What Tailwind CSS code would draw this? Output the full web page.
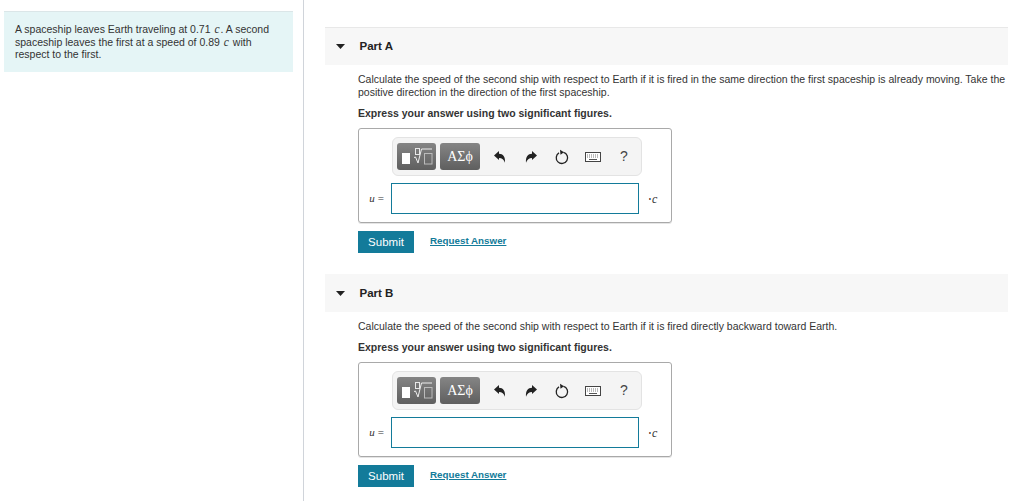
<!DOCTYPE html>
<html>
<head>
<meta charset="utf-8">
<script src="https://cdn.jsdelivr.net/npm/@tailwindcss/browser@4"></script>
</head>
<body class="bg-white">
<div class="flex w-[1024px] h-[501px] overflow-hidden font-['Liberation_Sans',Arial,sans-serif] text-[#333]">
  <aside class="w-[304px] shrink-0 border-r border-[#d0d4da] pt-[11px] pl-1 h-full">
    <div class="w-[289px] h-[61px] bg-[#e5f5f6] border-t border-[#dbe6e8] pt-[11px] pl-[11px] pr-2 text-[10.5px] leading-[12.5px] text-[#333]">
      A spaceship leaves Earth traveling at 0.71 <i class="mx-[1px] font-['Liberation_Serif',serif] text-[11.5px] leading-none">c</i>. A second spaceship leaves the first at a speed of 0.89 <i class="mx-[1px] font-['Liberation_Serif',serif] text-[11.5px] leading-none">c</i> with respect to the first.
    </div>
  </aside>
  <main class="w-[683px] ml-[21px] pt-[27px]">
    <section class="h-[247px]">
      <div class="h-[38px] bg-[#f7f7f7] border-t border-[#e8e8e8] flex items-center">
        <svg class="ml-[11px] w-[9px] h-[5px]" viewBox="0 0 9 5"><path d="M0 0h9L4.500 5z" fill="#222"/></svg>
        <span class="ml-[14.500px] text-[11.5px] font-bold text-[#222]">Part A</span>
      </div>
      <div class="pl-[33px]">
        <p class="mt-2 text-[10.5px] leading-[13px] w-[652px] text-[#333]">Calculate the speed of the second ship with respect to Earth if it is fired in the same direction the first spaceship is already moving. Take the positive direction in the direction of the first spaceship.</p>
        <p class="mt-[8px] text-[10.5px] leading-[13px] font-bold text-[#333]">Express your answer using two significant figures.</p>
        <div class="mt-[8px] w-[314px] h-[95px] border border-[#a9a9a9] rounded-[3px] shadow-[0_1px_0_#e5e5e5] relative">
          <div class="ml-[33px] mt-2 w-[250px] h-[39px] bg-[#f4f4f4] border border-[#e3e3e3] rounded-[6px] flex items-center pl-[4px]">
            <div class="w-[39px] h-[27px] rounded-[3px] bg-gradient-to-b from-[#858585] to-[#5f5f5f]">
              <svg class="w-[39px] h-[27px]" viewBox="0 0 39 27"><rect x="5" y="10" width="8" height="11" fill="#fff"/><rect x="18.500" y="5.500" width="4" height="6" fill="none" stroke="#e8e8e8"/><path d="M17 14.500l1.500-.5 2.500 6 3.500-14h10.500" fill="none" stroke="#eee"/><rect x="27.500" y="10.500" width="7.500" height="10.500" fill="none" stroke="#bbb"/></svg>
            </div>
            <div class="ml-1 w-[40px] h-[27px] rounded-[3px] bg-gradient-to-b from-[#858585] to-[#5f5f5f] flex items-center justify-center text-white text-[14px] font-['Liberation_Serif',serif]">ΑΣϕ</div>
            <svg class="ml-[14px] w-[12px] h-[12px]" viewBox="0 0 12 12"><path d="M0 4.500L5 0v2.800c4 0 6.500 3 6 9-1-3-3-4.800-6-4.800V9z" fill="#222"/></svg>
            <svg class="ml-[19px] w-[12px] h-[12px]" viewBox="0 0 12 12"><path d="M12 4.500L7 0v2.800c-4 0-6.500 3-6 9 1-3 3-4.800 6-4.800V9z" fill="#222"/></svg>
            <svg class="ml-[18px] w-[14px] h-[16px]" viewBox="0 0 14 16"><path d="M8.500 3.300a5.700 5.700 0 1 1-4.500 .6" fill="none" stroke="#222" stroke-width="1.300"/><path d="M5 .8L9 3.300 5.500 5.800z" fill="#222"/></svg>
            <svg class="ml-[16px] w-[16px] h-[10px]" viewBox="0 0 16 10"><rect x=".5" y=".5" width="15" height="9" fill="#fff" stroke="#444"/><path d="M2 3h12M2 5h12" stroke="#777" stroke-dasharray="1 1"/><path d="M4 7.500h8" stroke="#555"/></svg>
            <span class="ml-[19px] text-[14px] text-[#444]">?</span>
          </div>
          <div class="flex items-center mt-[7px] h-[31px]">
            <span class="w-[32px] text-right pr-[7px] text-[11px] text-[#333] font-['Liberation_Serif',serif]"><i class="mr-[3px]">u</i>=</span>
            <div class="w-[248px] h-[31px] border border-[#137b9a] bg-white"></div>
            <span class="ml-[9px] text-[12px] text-[#333] font-['Liberation_Serif',serif]">⋅<i>c</i></span>
          </div>
        </div>
        <div class="mt-2 flex items-start">
          <div class="w-[56px] h-[22px] pt-px bg-[#137b9a] text-white text-[11.5px] flex items-center justify-center">Submit</div>
          <span class="ml-4 mt-[3px] text-[9.8px] font-bold text-[#137b9a] underline">Request Answer</span>
        </div>
      </div>
    </section>
    <section>
      <div class="h-[38px] pt-px bg-[#f7f7f7] flex items-center">
        <svg class="ml-[11px] w-[9px] h-[5px]" viewBox="0 0 9 5"><path d="M0 0h9L4.500 5z" fill="#222"/></svg>
        <span class="ml-[14.500px] text-[11.5px] font-bold text-[#222]">Part B</span>
      </div>
      <div class="pl-[33px]">
        <p class="mt-2 text-[10.5px] leading-[13px] text-[#333]">Calculate the speed of the second ship with respect to Earth if it is fired directly backward toward Earth.</p>
        <p class="mt-[8px] text-[10.5px] leading-[13px] font-bold text-[#333]">Express your answer using two significant figures.</p>
        <div class="mt-[8px] w-[314px] h-[95px] border border-[#a9a9a9] rounded-[3px] shadow-[0_1px_0_#e5e5e5] relative">
          <div class="ml-[33px] mt-2 w-[250px] h-[39px] bg-[#f4f4f4] border border-[#e3e3e3] rounded-[6px] flex items-center pl-[4px]">
            <div class="w-[39px] h-[27px] rounded-[3px] bg-gradient-to-b from-[#858585] to-[#5f5f5f]">
              <svg class="w-[39px] h-[27px]" viewBox="0 0 39 27"><rect x="5" y="10" width="8" height="11" fill="#fff"/><rect x="18.500" y="5.500" width="4" height="6" fill="none" stroke="#e8e8e8"/><path d="M17 14.500l1.500-.5 2.500 6 3.500-14h10.500" fill="none" stroke="#eee"/><rect x="27.500" y="10.500" width="7.500" height="10.500" fill="none" stroke="#bbb"/></svg>
            </div>
            <div class="ml-1 w-[40px] h-[27px] rounded-[3px] bg-gradient-to-b from-[#858585] to-[#5f5f5f] flex items-center justify-center text-white text-[14px] font-['Liberation_Serif',serif]">ΑΣϕ</div>
            <svg class="ml-[14px] w-[12px] h-[12px]" viewBox="0 0 12 12"><path d="M0 4.500L5 0v2.800c4 0 6.500 3 6 9-1-3-3-4.800-6-4.800V9z" fill="#222"/></svg>
            <svg class="ml-[19px] w-[12px] h-[12px]" viewBox="0 0 12 12"><path d="M12 4.500L7 0v2.800c-4 0-6.500 3-6 9 1-3 3-4.800 6-4.800V9z" fill="#222"/></svg>
            <svg class="ml-[18px] w-[14px] h-[16px]" viewBox="0 0 14 16"><path d="M8.500 3.300a5.700 5.700 0 1 1-4.500 .6" fill="none" stroke="#222" stroke-width="1.300"/><path d="M5 .8L9 3.300 5.500 5.800z" fill="#222"/></svg>
            <svg class="ml-[16px] w-[16px] h-[10px]" viewBox="0 0 16 10"><rect x=".5" y=".5" width="15" height="9" fill="#fff" stroke="#444"/><path d="M2 3h12M2 5h12" stroke="#777" stroke-dasharray="1 1"/><path d="M4 7.500h8" stroke="#555"/></svg>
            <span class="ml-[19px] text-[14px] text-[#444]">?</span>
          </div>
          <div class="flex items-center mt-[7px] h-[31px]">
            <span class="w-[32px] text-right pr-[7px] text-[11px] text-[#333] font-['Liberation_Serif',serif]"><i class="mr-[3px]">u</i>=</span>
            <div class="w-[248px] h-[31px] border border-[#137b9a] bg-white"></div>
            <span class="ml-[9px] text-[12px] text-[#333] font-['Liberation_Serif',serif]">⋅<i>c</i></span>
          </div>
        </div>
        <div class="mt-2 flex items-start">
          <div class="w-[56px] h-[22px] pt-px bg-[#137b9a] text-white text-[11.5px] flex items-center justify-center">Submit</div>
          <span class="ml-4 mt-[3px] text-[9.8px] font-bold text-[#137b9a] underline">Request Answer</span>
        </div>
      </div>
    </section>
  </main>
</div>
</body>
</html>
